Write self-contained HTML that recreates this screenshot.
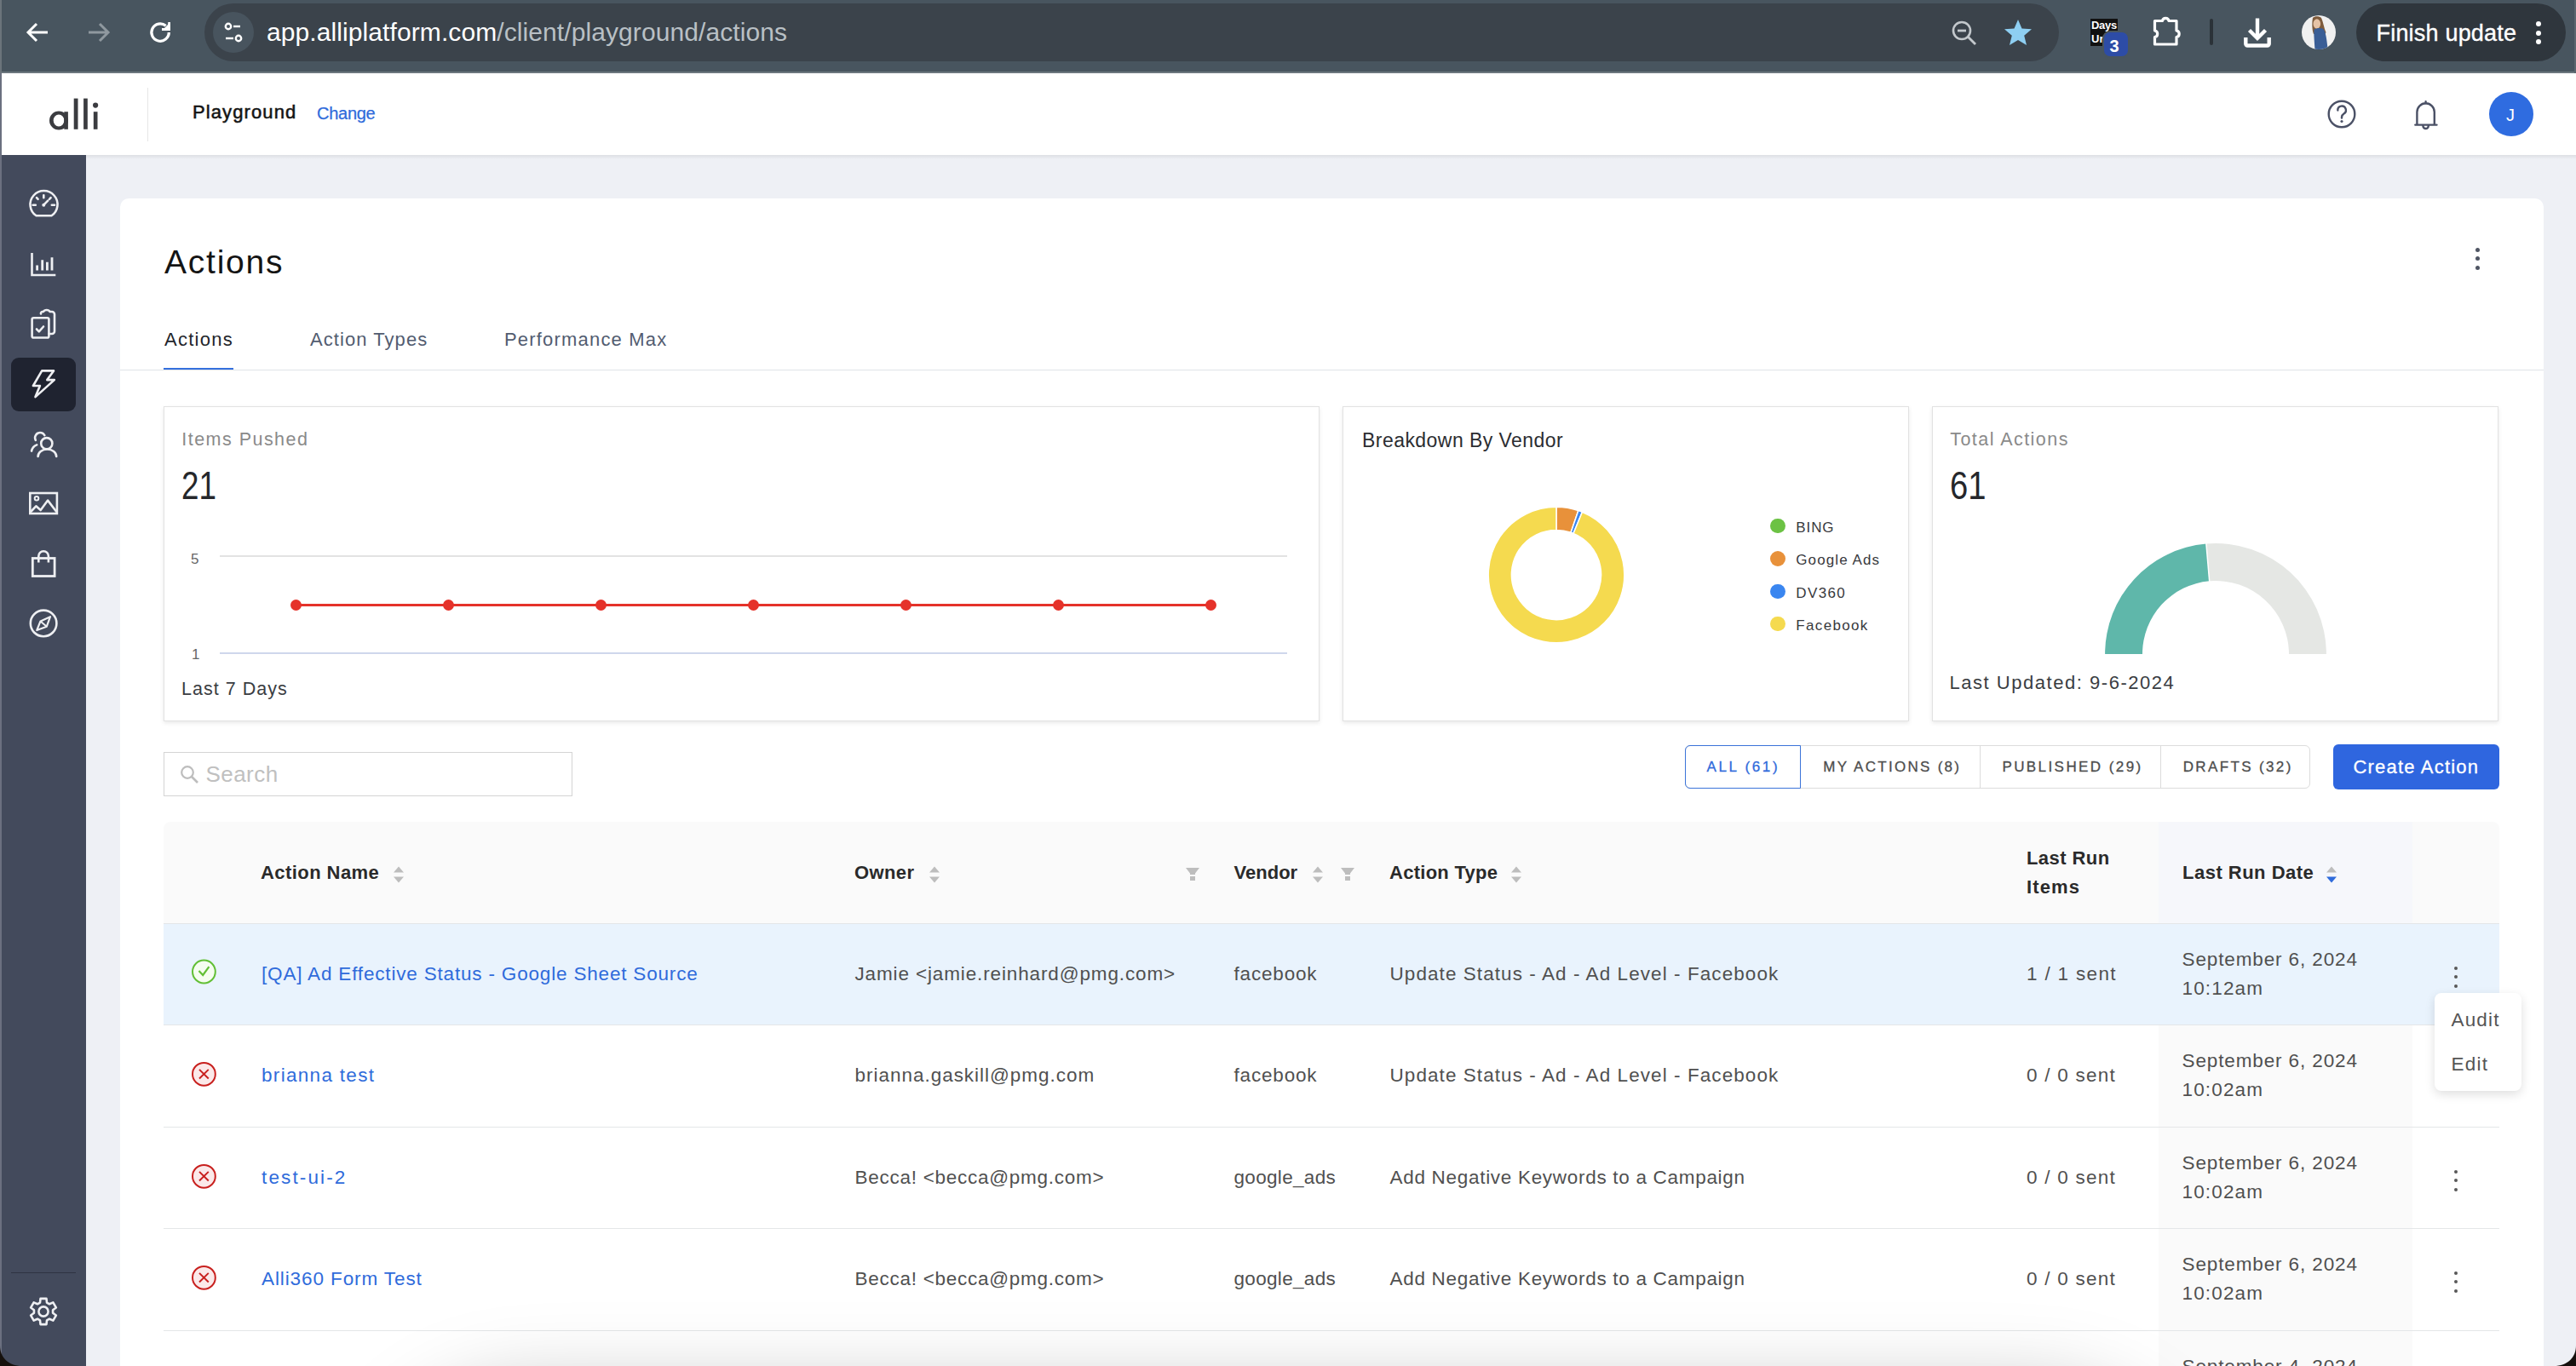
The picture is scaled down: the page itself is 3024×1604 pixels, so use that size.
<!DOCTYPE html>
<html><head><meta charset="utf-8"><title>Actions - alli</title>
<style>
html,body{margin:0;padding:0;width:3024px;height:1604px;overflow:hidden;background:#16110d;}
body{position:relative;font-family:"Liberation Sans",sans-serif;}
.t{position:absolute;white-space:nowrap;line-height:1;}
.r{position:absolute;}
</style></head><body>
<div class="r" style="left:0px;top:0px;width:3024px;height:86px;background:#48555f;"></div>
<div class="r" style="left:0px;top:84px;width:3024px;height:2px;background:#6c777e;"></div>
<div class="r" style="left:0px;top:0px;width:2px;height:86px;background:#6b747b;"></div>
<div class="r" style="left:3022px;top:0px;width:2px;height:86px;background:#5b666e;"></div>
<svg class="r" style="left:28px;top:22px;" width="32" height="32" viewBox="0 0 32 32"><path d="M28 16H6M15 6L5 16L15 26" fill="none" stroke="#fff" stroke-width="3" stroke-linecap="butt" stroke-linejoin="miter"/></svg>
<svg class="r" style="left:100px;top:22px;" width="32" height="32" viewBox="0 0 32 32"><path d="M4 16H26M17 6L27 16L17 26" fill="none" stroke="#8f989f" stroke-width="3"/></svg>
<svg class="r" style="left:160px;top:10px" width="56" height="56" viewBox="160 10 56 56"><path d="M194.66 30.25A10.2 10.2 0 1 0 198.3 38.06" fill="none" stroke="#fff" stroke-width="3.3"/><path d="M190 36H200V26Z" fill="#fff"/><path d="M197.2 26H200V36H190V33H197.2Z" fill="#fff"/></svg>
<div class="r" style="left:240px;top:4px;width:2177px;height:68px;background:#3b434b;border-radius:34px;"></div>
<div class="r" style="left:250px;top:14px;width:48px;height:48px;background:#48545e;border-radius:24px;"></div>
<svg class="r" style="left:258px;top:22px;" width="32" height="32" viewBox="0 0 32 32"><circle cx="10" cy="9" r="3.2" fill="none" stroke="#fff" stroke-width="2.4"/><path d="M16 9H24" stroke="#fff" stroke-width="2.4"/><circle cx="22" cy="23" r="3.2" fill="none" stroke="#fff" stroke-width="2.4"/><path d="M7 23H16" stroke="#fff" stroke-width="2.4"/></svg>
<div class="t" style="left:313px;top:22.5px;font-size:30px;color:#ffffff;letter-spacing:0.09px;">app.alliplatform.com<span style="color:#b9c0c5">/client/playground/actions</span></div>
<svg class="r" style="left:2289px;top:22px;" width="34" height="34" viewBox="0 0 34 34"><circle cx="14" cy="14" r="10" fill="none" stroke="#c3c8cc" stroke-width="2.6"/><path d="M21 21L30 30" stroke="#c3c8cc" stroke-width="2.8"/><path d="M9 14H19" stroke="#c3c8cc" stroke-width="2.8"/></svg>
<svg class="r" style="left:2350px;top:20px;" width="38" height="36" viewBox="0 0 38 36"><path d="M19 3L23.5 13.5L35 14.3L26.2 21.8L29 33L19 27L9 33L11.8 21.8L3 14.3L14.5 13.5Z" fill="#8ecff2"/></svg>
<div class="r" style="left:2454px;top:22px;width:32px;height:32px;background:#111;"></div>
<div class="t" style="left:2455px;top:23.2px;font-size:13px;color:#fff;font-weight:700;letter-spacing:-0.3px;">Days</div>
<div class="t" style="left:2455px;top:38.5px;font-size:13px;color:#fff;font-weight:700;">Ur</div>
<div class="r" style="left:2468px;top:36px;width:32px;height:32px;background:#2d4ca6;border-radius:9px;border:2.5px solid #48555f;box-sizing:border-box;"></div>
<div class="t" style="left:2476.5px;top:44.0px;font-size:20px;color:#fff;font-weight:700;">3</div>
<svg class="r" style="left:2520px;top:14px;" width="48" height="46" viewBox="0 0 48 46"><path d="M9.5 10.5H18.5A3.8 3.8 0 0 1 26 10.5H35V22A3.8 3.8 0 0 1 35 29.5V38H9.5V29.5A3.8 3.8 0 0 0 9.5 22Z" fill="none" stroke="#fff" stroke-width="3.2" stroke-linejoin="round"/></svg>
<div class="r" style="left:2594px;top:22px;width:4px;height:31px;background:#2b3238;border-radius:2px;"></div>
<svg class="r" style="left:2630px;top:18px;" width="40" height="40" viewBox="0 0 40 40"><path d="M20 3.5V27M10.5 17.5L20 27L29.5 17.5" fill="none" stroke="#fff" stroke-width="4.4"/><path d="M6.3 26V33.5A2 2 0 0 0 8.3 35.5H31.7A2 2 0 0 0 33.7 33.5V26" fill="none" stroke="#fff" stroke-width="4.4"/></svg>
<svg class="r" style="left:2702px;top:18px;" width="40" height="40" viewBox="0 0 40 40"><defs><clipPath id="avc"><circle cx="20" cy="20" r="20"/></clipPath></defs><g clip-path="url(#avc)"><rect width="40" height="40" fill="#f1f1f1"/><path d="M13 3C15 0.5 21 0.5 23 3C25 7 26 14 28.5 20L27 23L14 22C12 17 12 8 13 3Z" fill="#7e5b3c"/><ellipse cx="17.8" cy="10" rx="4.3" ry="5.8" fill="#e6c3a6"/><path d="M14.5 16.5C17 15 22 14.5 24.5 15.5C27.5 17 29 24 30.5 38.5L26 40H15.5C15 32 14 22 14.5 16.5Z" fill="#3a5e96"/></g></svg>
<div class="r" style="left:2766px;top:4px;width:246px;height:68px;background:#2f363d;border-radius:34px;"></div>
<div class="t" style="left:2789.5px;top:26.1px;font-size:27px;color:#fff;letter-spacing:0.2px;-webkit-text-stroke:0.35px #fff;">Finish update</div>
<div class="r" style="left:2977px;top:25px;width:6px;height:6px;background:#fff;border-radius:3px;"></div>
<div class="r" style="left:2977px;top:35.5px;width:6px;height:6px;background:#fff;border-radius:3px;"></div>
<div class="r" style="left:2977px;top:46px;width:6px;height:6px;background:#fff;border-radius:3px;"></div>
<div class="r" style="left:0px;top:86px;width:3024px;height:96px;background:#ffffff;"></div>
<div class="r" style="left:0px;top:86px;width:2px;height:1518px;background:#6b7080;"></div>
<svg class="r" style="left:0;top:85px" width="130" height="97" viewBox="0 85 130 97"><path fill-rule="evenodd" fill="#3b3c40" d="M69 130.5A11 11 0 1 0 69 152.5A11 11 0 1 0 69 130.5ZM69 134.6A6.3 6.9 0 1 1 69 148.4A6.3 6.9 0 1 1 69 134.6Z"/><rect x="75.3" y="131.2" width="4.6" height="20.6" fill="#3b3c40"/><rect x="86.7" y="115.6" width="4.8" height="36.2" fill="#3b3c40"/><rect x="98.1" y="115.6" width="4.7" height="36.2" fill="#3b3c40"/><rect x="109.8" y="131.2" width="4.7" height="20.6" fill="#3b3c40"/><circle cx="112.1" cy="123.6" r="3.1" fill="#3b3c40"/></svg>
<div class="r" style="left:173px;top:103px;width:1px;height:63px;background:#e6e6e6;"></div>
<div class="t" style="left:226px;top:121.3px;font-size:22px;color:#141414;letter-spacing:1.1px;-webkit-text-stroke:0.55px #141414;">Playground</div>
<div class="t" style="left:372px;top:123.0px;font-size:20px;color:#2f6bdb;letter-spacing:-0.27px;-webkit-text-stroke:0.25px #2f6bdb;">Change</div>
<svg class="r" style="left:2729px;top:114px;" width="40" height="40" viewBox="0 0 40 40"><circle cx="20" cy="20" r="15.3" fill="none" stroke="#4b5166" stroke-width="2.4"/><path d="M15.3 15.5A4.8 4.8 0 1 1 22.5 19.5C21 20.5 20 21.3 20 23.5V24.5" fill="none" stroke="#4b5166" stroke-width="2.4" stroke-linecap="round"/><circle cx="20" cy="28.5" r="1.6" fill="#4b5166"/></svg>
<svg class="r" style="left:2830px;top:114px;" width="36" height="42" viewBox="0 0 36 42"><path d="M7.4 32.6V17.5A10.2 10.2 0 0 1 27.8 17.5V32.6M5.3 32.6H30.5M17.6 5.3V7.5M14.4 33.8A3.2 3.2 0 0 0 20.8 33.8" fill="none" stroke="#4b5166" stroke-width="2.4" stroke-linecap="round"/></svg>
<div class="r" style="left:2922px;top:108px;width:52px;height:52px;background:#2f6ce0;border-radius:26px;"></div>
<div class="t" style="left:2942px;top:125.0px;font-size:20px;color:#fff;">J</div>
<div class="r" style="left:2px;top:182px;width:99px;height:1422px;background:#434a5c;"></div>
<div class="r" style="left:13px;top:420px;width:76px;height:62.5px;background:#1f2330;border-radius:9px;"></div>
<div class="r" style="left:13px;top:1494px;width:76px;height:1px;background:#2e3342;"></div>
<svg class="r" style="left:0;top:0" width="101" height="1604" viewBox="0 0 101 1604"><path d="M42.5 253.3A16 16 0 1 1 60.5 253.3Z" fill="none" stroke="#eeeff2" stroke-width="2.6" stroke-linecap="round" stroke-linejoin="round"/><path d="M38.6 240.7H41.8M60.8 240.7H64M51.3 229.3V232.2M43 232.2L44.6 233.9M59.6 232.2L58 233.9M51.3 240.7L56.2 235.7" fill="none" stroke="#eeeff2" stroke-width="2.6" stroke-linecap="round" stroke-linejoin="round"/><circle cx="51.3" cy="240.7" r="2" fill="#eeeff2"/><path d="M37.5 297V323H65.3" fill="none" stroke="#eeeff2" stroke-width="2.6" stroke-linejoin="miter"/><path d="M43.6 317.5V311.5M49.7 317.5V305.3M55.4 317.5V307.8M61 317.5V302.3" fill="none" stroke="#eeeff2" stroke-width="2.8"/><path d="M48 368.5A2 2 0 0 1 50 366H51A4 3 0 0 1 58.5 366H61A3 3 0 0 1 64 369V389A3 3 0 0 1 61 392H57.5" fill="none" stroke="#eeeff2" stroke-width="2.6" stroke-linecap="round" stroke-linejoin="round"/><rect x="37.6" y="373.3" width="19.8" height="23.2" rx="1.8" fill="none" stroke="#eeeff2" stroke-width="2.6" stroke-linecap="round" stroke-linejoin="round"/><path d="M43 386.5L45.8 389.3L51 383.5" fill="none" stroke="#eeeff2" stroke-width="2.6" stroke-linecap="round" stroke-linejoin="round"/><path d="M49.2 435.4H63L55.3 446.1H63.8L41.5 466.1L46.9 453H38.9Z" fill="none" stroke="#eeeff2" stroke-width="2.6" stroke-linecap="round" stroke-linejoin="round"/><circle cx="54.8" cy="520.7" r="6.6" fill="none" stroke="#eeeff2" stroke-width="2.6" stroke-linecap="round" stroke-linejoin="round"/><path d="M44.6 536A10.8 8.5 0 0 1 66.2 536" fill="none" stroke="#eeeff2" stroke-width="2.6" stroke-linecap="round" stroke-linejoin="round"/><path d="M41.8 516.8A5.5 5.5 0 1 1 52.3 511.2" fill="none" stroke="#eeeff2" stroke-width="2.6" stroke-linecap="round" stroke-linejoin="round"/><path d="M37 529.6A10 10 0 0 1 43.2 522.4" fill="none" stroke="#eeeff2" stroke-width="2.6" stroke-linecap="round" stroke-linejoin="round"/><rect x="35.3" y="579" width="31.6" height="24" fill="none" stroke="#eeeff2" stroke-width="2.6"/><circle cx="43" cy="585.3" r="2.3" fill="none" stroke="#eeeff2" stroke-width="2"/><path d="M36.5 600.5L42.3 594.3L47.7 599L56.1 587.6L66 600.5" fill="none" stroke="#eeeff2" stroke-width="2.6" stroke-linecap="round" stroke-linejoin="round"/><rect x="38.3" y="655.5" width="25.8" height="21" fill="none" stroke="#eeeff2" stroke-width="2.8"/><path d="M45.3 660.5V653A5.8 5.8 0 0 1 56.9 653V660.5" fill="none" stroke="#eeeff2" stroke-width="2.6"/><circle cx="51.1" cy="731.9" r="15.3" fill="none" stroke="#eeeff2" stroke-width="2.6" stroke-linecap="round" stroke-linejoin="round"/><path d="M59 724.2L54.8 735.7L43.3 740L47.5 729.4Z" fill="none" stroke="#eeeff2" stroke-width="2.2" stroke-linejoin="round"/><path d="M47.5 729.4L54.8 735.7" stroke="#eeeff2" stroke-width="2"/><path d="M47.51 1524.90 L54.49 1524.90 L55.01 1529.54 L58.05 1531.30 L62.34 1529.43 L65.82 1535.47 L62.06 1538.25 L62.06 1541.75 L65.82 1544.53 L62.34 1550.57 L58.05 1548.70 L55.01 1550.46 L54.49 1555.10 L47.51 1555.10 L46.99 1550.46 L43.95 1548.70 L39.66 1550.57 L36.18 1544.53 L39.94 1541.75 L39.94 1538.25 L36.18 1535.47 L39.66 1529.43 L43.95 1531.30 L46.99 1529.54Z" fill="none" stroke="#eeeff2" stroke-width="2.6" stroke-linecap="round" stroke-linejoin="round"/><circle cx="51" cy="1540" r="5.6" fill="none" stroke="#eeeff2" stroke-width="2.6" stroke-linecap="round" stroke-linejoin="round"/></svg>
<div class="r" style="left:101px;top:182px;width:2923px;height:1422px;background:#eef0f5;"></div>
<div class="r" style="left:101px;top:182px;width:2923px;height:5px;background:linear-gradient(rgba(0,0,0,0.07),rgba(0,0,0,0));"></div>
<div class="r" style="left:141px;top:233px;width:2845px;height:1400px;background:#ffffff;border-radius:10px;"></div>
<div class="t" style="left:193px;top:287.9px;font-size:39px;color:#141414;letter-spacing:1.77px;">Actions</div>
<div class="r" style="left:2905.5px;top:290.5px;width:5px;height:5px;background:#4f5563;border-radius:3px;"></div>
<div class="r" style="left:2905.5px;top:301.0px;width:5px;height:5px;background:#4f5563;border-radius:3px;"></div>
<div class="r" style="left:2905.5px;top:311.5px;width:5px;height:5px;background:#4f5563;border-radius:3px;"></div>
<div class="t" style="left:193px;top:387.8px;font-size:22px;color:#22252b;letter-spacing:1.26px;">Actions</div>
<div class="t" style="left:364px;top:387.8px;font-size:22px;color:#525c70;letter-spacing:1.06px;">Action Types</div>
<div class="t" style="left:592px;top:387.8px;font-size:22px;color:#525c70;letter-spacing:1.19px;">Performance Max</div>
<div class="r" style="left:141px;top:433.5px;width:2845px;height:1px;background:#e0e3e8;"></div>
<div class="r" style="left:192px;top:432.2px;width:82px;height:2px;background:#3570dd;"></div>
<div class="r" style="left:192px;top:477px;width:1357px;height:370px;background:#fff;border:1px solid #e2e2e2;box-sizing:border-box;box-shadow:0 2px 5px rgba(0,0,0,0.09);"></div>
<div class="r" style="left:1576px;top:477px;width:665px;height:370px;background:#fff;border:1px solid #e2e2e2;box-sizing:border-box;box-shadow:0 2px 5px rgba(0,0,0,0.09);"></div>
<div class="r" style="left:2268px;top:477px;width:665px;height:370px;background:#fff;border:1px solid #e2e2e2;box-sizing:border-box;box-shadow:0 2px 5px rgba(0,0,0,0.09);"></div>
<div class="t" style="left:213.3px;top:506.4px;font-size:21.5px;color:#8a8a8a;letter-spacing:1.47px;">Items Pushed</div>
<div class="t" style="left:213px;top:546.9px;font-size:46px;color:#25272b;transform:scaleX(0.8);transform-origin:0 0;">21</div>
<div class="t" style="left:224px;top:647.5px;font-size:17px;color:#666;">5</div>
<div class="t" style="left:225px;top:759.5px;font-size:17px;color:#666;">1</div>
<div class="r" style="left:258px;top:652px;width:1253px;height:2px;background:#e3e3e3;"></div>
<div class="r" style="left:258px;top:766px;width:1253px;height:2px;background:#cfd7ec;"></div>
<div class="r" style="left:347px;top:708.5px;width:1075px;height:3px;background:#e5322a;"></div>
<div class="r" style="left:341.0px;top:703.5px;width:13px;height:13px;background:#e5322a;border-radius:7px;"></div>
<div class="r" style="left:520.03px;top:703.5px;width:13px;height:13px;background:#e5322a;border-radius:7px;"></div>
<div class="r" style="left:699.06px;top:703.5px;width:13px;height:13px;background:#e5322a;border-radius:7px;"></div>
<div class="r" style="left:878.09px;top:703.5px;width:13px;height:13px;background:#e5322a;border-radius:7px;"></div>
<div class="r" style="left:1057.12px;top:703.5px;width:13px;height:13px;background:#e5322a;border-radius:7px;"></div>
<div class="r" style="left:1236.15px;top:703.5px;width:13px;height:13px;background:#e5322a;border-radius:7px;"></div>
<div class="r" style="left:1415.18px;top:703.5px;width:13px;height:13px;background:#e5322a;border-radius:7px;"></div>
<div class="t" style="left:213px;top:798.7px;font-size:21.5px;color:#3a3d42;letter-spacing:1.02px;">Last 7 Days</div>
<div class="t" style="left:1599px;top:505.9px;font-size:23px;color:#2b2d31;letter-spacing:0.45px;">Breakdown By Vendor</div>
<svg class="r" style="left:1727px;top:575px;" width="200" height="200" viewBox="0 0 200 200"><path d="M100.00 20.20A79.8 79.8 0 0 1 125.85 24.50L117.04 50.24A52.6 52.6 0 0 0 100.00 47.40Z" fill="#e8913a" stroke="#fff" stroke-width="1.5"/><path d="M125.85 24.50A79.8 79.8 0 0 1 130.41 26.22L120.04 51.37A52.6 52.6 0 0 0 117.04 50.24Z" fill="#3a86f0" stroke="#fff" stroke-width="1.5"/><path d="M130.41 26.22A79.8 79.8 0 1 1 99.99 20.20L99.99 47.40A52.6 52.6 0 1 0 120.04 51.37Z" fill="#f5da4f" stroke="#fff" stroke-width="1.5"/></svg>
<div class="r" style="left:2078.4px;top:609.0px;width:17.2px;height:17.2px;background:#6cc244;border-radius:9px;"></div>
<div class="t" style="left:2108.3px;top:610.8px;font-size:17px;color:#38393d;letter-spacing:0.89px;">BING</div>
<div class="r" style="left:2078.4px;top:647.35px;width:17.2px;height:17.2px;background:#e8913a;border-radius:9px;"></div>
<div class="t" style="left:2108.3px;top:649.1px;font-size:17px;color:#38393d;letter-spacing:1.1px;">Google Ads</div>
<div class="r" style="left:2078.4px;top:685.7px;width:17.2px;height:17.2px;background:#3a86f0;border-radius:9px;"></div>
<div class="t" style="left:2108.3px;top:687.5px;font-size:17px;color:#38393d;letter-spacing:1.37px;">DV360</div>
<div class="r" style="left:2078.4px;top:724.0500000000001px;width:17.2px;height:17.2px;background:#f5da4f;border-radius:9px;"></div>
<div class="t" style="left:2108.3px;top:725.8px;font-size:17px;color:#38393d;letter-spacing:1.33px;">Facebook</div>
<div class="t" style="left:2289.2px;top:506.4px;font-size:21.5px;color:#8a8a8a;letter-spacing:1.46px;">Total Actions</div>
<div class="t" style="left:2289px;top:546.9px;font-size:46px;color:#25272b;transform:scaleX(0.83);transform-origin:0 0;">61</div>
<svg class="r" style="left:2460.6px;top:628.1px;" width="280" height="140" viewBox="0 0 280 140"><path d="M10.10 140.00A129.9 129.9 0 0 1 128.90 10.57L132.65 54.31A86 86 0 0 0 54.00 140.00Z" fill="#5fb7aa"/><path d="M128.90 10.57A129.9 129.9 0 0 1 269.90 140.00L226.00 140.00A86 86 0 0 0 132.65 54.31Z" fill="#e5e7e4"/><path d="M132.74 55.31 L128.81 9.48" stroke="#fff" stroke-width="1.5"/></svg>
<div class="t" style="left:2288.5px;top:791.3px;font-size:22px;color:#3a3d42;letter-spacing:1.53px;">Last Updated: 9-6-2024</div>
<div class="r" style="left:192px;top:883px;width:480px;height:52px;background:#fff;border:1.5px solid #d4d4d4;box-sizing:border-box;"></div>
<svg class="r" style="left:210px;top:897px;" width="26" height="26" viewBox="0 0 26 26"><circle cx="10" cy="10" r="6.8" fill="none" stroke="#bdbdbd" stroke-width="2.2"/><path d="M15 15L22 22" stroke="#bdbdbd" stroke-width="2.6"/></svg>
<div class="t" style="left:241.5px;top:895.9px;font-size:26px;color:#c0c0c0;letter-spacing:0.45px;">Search</div>
<div class="r" style="left:1978px;top:875px;width:734px;height:51px;background:#fff;border:1.5px solid #dcdcdc;border-radius:6px;box-sizing:border-box;"></div>
<div class="r" style="left:2323.5px;top:876px;width:1.5px;height:49px;background:#dcdcdc;"></div>
<div class="r" style="left:2535.5px;top:876px;width:1.5px;height:49px;background:#dcdcdc;"></div>
<div class="r" style="left:1978px;top:875px;width:136px;height:51px;background:transparent;border:1.5px solid #3b73d9;border-radius:6px 0 0 6px;box-sizing:border-box;"></div>
<div class="t" style="left:2003.4px;top:891.5px;font-size:17px;color:#2f6bdb;letter-spacing:2.67px;-webkit-text-stroke:0.3px #2f6bdb;">ALL (61)</div>
<div class="t" style="left:2140.3px;top:891.5px;font-size:17px;color:#4d4d4d;letter-spacing:2.28px;-webkit-text-stroke:0.3px #4d4d4d;">MY ACTIONS (8)</div>
<div class="t" style="left:2350.4px;top:891.5px;font-size:17px;color:#4d4d4d;letter-spacing:2.42px;-webkit-text-stroke:0.3px #4d4d4d;">PUBLISHED (29)</div>
<div class="t" style="left:2562.7px;top:891.5px;font-size:17px;color:#4d4d4d;letter-spacing:2.37px;-webkit-text-stroke:0.3px #4d4d4d;">DRAFTS (32)</div>
<div class="r" style="left:2739px;top:874px;width:195px;height:53px;background:#2f66df;border-radius:6px;"></div>
<div class="t" style="left:2762.5px;top:889.5px;font-size:22px;color:#fff;letter-spacing:1.2px;-webkit-text-stroke:0.3px #fff;">Create Action</div>
<div class="r" style="left:192px;top:965px;width:2742px;height:120px;background:#fafafa;border-radius:8px 8px 0 0;"></div>
<div class="r" style="left:2534px;top:965px;width:298px;height:120px;background:#f6f7fb;"></div>
<div class="r" style="left:192px;top:1084px;width:2742px;height:119.5px;background:#e9f3fd;"></div>
<div class="r" style="left:2534px;top:1203px;width:298px;height:401px;background:#fafafa;"></div>
<div class="r" style="left:192px;top:1084px;width:2742px;height:1px;background:#e4e6e8;"></div>
<div class="r" style="left:192px;top:1203.3px;width:2742px;height:1px;background:#e4e6e8;"></div>
<div class="r" style="left:192px;top:1322.8px;width:2742px;height:1px;background:#e4e6e8;"></div>
<div class="r" style="left:192px;top:1442.3px;width:2742px;height:1px;background:#e4e6e8;"></div>
<div class="r" style="left:192px;top:1561.6px;width:2742px;height:1px;background:#e4e6e8;"></div>
<div class="t" style="left:306px;top:1014.3px;font-size:22px;color:#2a2a2a;font-weight:700;letter-spacing:0.43px;">Action Name</div>
<svg class="r" style="left:461px;top:1016px;" width="14" height="22" viewBox="0 0 14 22"><path d="M7 1.5L13 8.5H1Z" fill="#bdbdbd"/><path d="M7 20.5L13 13.5H1Z" fill="#bdbdbd"/></svg>
<div class="t" style="left:1003px;top:1014.3px;font-size:22px;color:#2a2a2a;font-weight:700;letter-spacing:0.4px;">Owner</div>
<svg class="r" style="left:1089.5px;top:1016px;" width="14" height="22" viewBox="0 0 14 22"><path d="M7 1.5L13 8.5H1Z" fill="#bdbdbd"/><path d="M7 20.5L13 13.5H1Z" fill="#bdbdbd"/></svg>
<svg class="r" style="left:1390.6px;top:1017px;" width="18" height="18" viewBox="0 0 18 18"><path d="M1 2H17L12 8.5V10H6V8.5Z" fill="#bdbdbd"/><rect x="6" y="12" width="6" height="5" fill="#bdbdbd"/></svg>
<div class="t" style="left:1448.5px;top:1014.3px;font-size:22px;color:#2a2a2a;font-weight:700;letter-spacing:0.02px;">Vendor</div>
<svg class="r" style="left:1540px;top:1016px;" width="14" height="22" viewBox="0 0 14 22"><path d="M7 1.5L13 8.5H1Z" fill="#bdbdbd"/><path d="M7 20.5L13 13.5H1Z" fill="#bdbdbd"/></svg>
<svg class="r" style="left:1573px;top:1017px;" width="18" height="18" viewBox="0 0 18 18"><path d="M1 2H17L12 8.5V10H6V8.5Z" fill="#bdbdbd"/><rect x="6" y="12" width="6" height="5" fill="#bdbdbd"/></svg>
<div class="t" style="left:1631px;top:1014.3px;font-size:22px;color:#2a2a2a;font-weight:700;letter-spacing:0.27px;">Action Type</div>
<svg class="r" style="left:1773px;top:1016px;" width="14" height="22" viewBox="0 0 14 22"><path d="M7 1.5L13 8.5H1Z" fill="#bdbdbd"/><path d="M7 20.5L13 13.5H1Z" fill="#bdbdbd"/></svg>
<div class="t" style="left:2379px;top:997.3px;font-size:22px;color:#2a2a2a;font-weight:700;letter-spacing:0.43px;">Last Run</div>
<div class="t" style="left:2379px;top:1031.3px;font-size:22px;color:#2a2a2a;font-weight:700;letter-spacing:1.14px;">Items</div>
<div class="t" style="left:2562px;top:1014.3px;font-size:22px;color:#2a2a2a;font-weight:700;letter-spacing:0.49px;">Last Run Date</div>
<svg class="r" style="left:2729.5px;top:1016px;" width="14" height="22" viewBox="0 0 14 22"><path d="M7 1.5L13 8.5H1Z" fill="#bdbdbd"/><path d="M7 20.5L13 13.5H1Z" fill="#2f6bdb"/></svg>
<svg class="r" style="left:224px;top:1126.3px;" width="31" height="31" viewBox="0 0 31 31"><circle cx="15.4" cy="15" r="13.4" fill="#f5fdf0" stroke="#62bf35" stroke-width="2"/><path d="M9.5 14L14.2 19L21.4 9.2" fill="none" stroke="#62bf35" stroke-width="2.2" stroke-linejoin="miter"/></svg>
<div class="t" style="left:307px;top:1133.4px;font-size:22.5px;color:#2f6bdb;letter-spacing:0.82px;">[QA] Ad Effective Status - Google Sheet Source</div>
<div class="t" style="left:1003.5px;top:1133.4px;font-size:22.5px;color:#505050;letter-spacing:0.87px;">Jamie &lt;jamie.reinhard@pmg.com&gt;</div>
<div class="t" style="left:1448.5px;top:1133.4px;font-size:22.5px;color:#505050;letter-spacing:0.82px;">facebook</div>
<div class="t" style="left:1631.5px;top:1133.4px;font-size:22.5px;color:#505050;letter-spacing:1.07px;">Update Status - Ad - Ad Level - Facebook</div>
<div class="t" style="left:2379px;top:1133.4px;font-size:22.5px;color:#505050;letter-spacing:1.33px;">1 / 1 sent</div>
<div class="t" style="left:2561.5px;top:1116.2px;font-size:22.5px;color:#505050;letter-spacing:0.88px;">September 6, 2024</div>
<div class="t" style="left:2561.5px;top:1150.2px;font-size:22.5px;color:#505050;letter-spacing:1.16px;">10:12am</div>
<div class="r" style="left:2881.2px;top:1134.7px;width:4.2px;height:4.2px;background:#585858;border-radius:3px;"></div>
<div class="r" style="left:2881.2px;top:1145.2px;width:4.2px;height:4.2px;background:#585858;border-radius:3px;"></div>
<div class="r" style="left:2881.2px;top:1155.7px;width:4.2px;height:4.2px;background:#585858;border-radius:3px;"></div>
<svg class="r" style="left:224px;top:1246px;" width="31" height="31" viewBox="0 0 31 31"><circle cx="15.4" cy="15.3" r="13.4" fill="#fbe9e9" stroke="#c8201e" stroke-width="2"/><path d="M10 9.9L20.8 20.5M20.8 9.9L10 20.5" fill="none" stroke="#c8201e" stroke-width="2"/></svg>
<div class="t" style="left:307px;top:1252.4px;font-size:22.5px;color:#2f6bdb;letter-spacing:1.31px;">brianna test</div>
<div class="t" style="left:1003.5px;top:1252.4px;font-size:22.5px;color:#505050;letter-spacing:0.98px;">brianna.gaskill@pmg.com</div>
<div class="t" style="left:1448.5px;top:1252.4px;font-size:22.5px;color:#505050;letter-spacing:0.82px;">facebook</div>
<div class="t" style="left:1631.5px;top:1252.4px;font-size:22.5px;color:#505050;letter-spacing:1.07px;">Update Status - Ad - Ad Level - Facebook</div>
<div class="t" style="left:2379px;top:1252.4px;font-size:22.5px;color:#505050;letter-spacing:1.24px;">0 / 0 sent</div>
<div class="t" style="left:2561.5px;top:1235.2px;font-size:22.5px;color:#505050;letter-spacing:0.88px;">September 6, 2024</div>
<div class="t" style="left:2561.5px;top:1269.2px;font-size:22.5px;color:#505050;letter-spacing:1.16px;">10:02am</div>
<div class="r" style="left:2881.2px;top:1253.7px;width:4.2px;height:4.2px;background:#585858;border-radius:3px;"></div>
<div class="r" style="left:2881.2px;top:1264.2px;width:4.2px;height:4.2px;background:#585858;border-radius:3px;"></div>
<div class="r" style="left:2881.2px;top:1274.7px;width:4.2px;height:4.2px;background:#585858;border-radius:3px;"></div>
<svg class="r" style="left:224px;top:1365.8px;" width="31" height="31" viewBox="0 0 31 31"><circle cx="15.4" cy="15.3" r="13.4" fill="#fbe9e9" stroke="#c8201e" stroke-width="2"/><path d="M10 9.9L20.8 20.5M20.8 9.9L10 20.5" fill="none" stroke="#c8201e" stroke-width="2"/></svg>
<div class="t" style="left:307px;top:1372.2px;font-size:22.5px;color:#2f6bdb;letter-spacing:2.13px;">test-ui-2</div>
<div class="t" style="left:1003.5px;top:1372.2px;font-size:22.5px;color:#505050;letter-spacing:0.73px;">Becca! &lt;becca@pmg.com&gt;</div>
<div class="t" style="left:1448.5px;top:1372.2px;font-size:22.5px;color:#505050;letter-spacing:0.32px;">google_ads</div>
<div class="t" style="left:1631.5px;top:1372.2px;font-size:22.5px;color:#505050;letter-spacing:0.7px;">Add Negative Keywords to a Campaign</div>
<div class="t" style="left:2379px;top:1372.2px;font-size:22.5px;color:#505050;letter-spacing:1.24px;">0 / 0 sent</div>
<div class="t" style="left:2561.5px;top:1355.0px;font-size:22.5px;color:#505050;letter-spacing:0.88px;">September 6, 2024</div>
<div class="t" style="left:2561.5px;top:1389.0px;font-size:22.5px;color:#505050;letter-spacing:1.16px;">10:02am</div>
<div class="r" style="left:2881.2px;top:1373.5px;width:4.2px;height:4.2px;background:#585858;border-radius:3px;"></div>
<div class="r" style="left:2881.2px;top:1384.0px;width:4.2px;height:4.2px;background:#585858;border-radius:3px;"></div>
<div class="r" style="left:2881.2px;top:1394.5px;width:4.2px;height:4.2px;background:#585858;border-radius:3px;"></div>
<svg class="r" style="left:224px;top:1485px;" width="31" height="31" viewBox="0 0 31 31"><circle cx="15.4" cy="15.3" r="13.4" fill="#fbe9e9" stroke="#c8201e" stroke-width="2"/><path d="M10 9.9L20.8 20.5M20.8 9.9L10 20.5" fill="none" stroke="#c8201e" stroke-width="2"/></svg>
<div class="t" style="left:307px;top:1491.4px;font-size:22.5px;color:#2f6bdb;letter-spacing:0.9px;">Alli360 Form Test</div>
<div class="t" style="left:1003.5px;top:1491.4px;font-size:22.5px;color:#505050;letter-spacing:0.73px;">Becca! &lt;becca@pmg.com&gt;</div>
<div class="t" style="left:1448.5px;top:1491.4px;font-size:22.5px;color:#505050;letter-spacing:0.32px;">google_ads</div>
<div class="t" style="left:1631.5px;top:1491.4px;font-size:22.5px;color:#505050;letter-spacing:0.7px;">Add Negative Keywords to a Campaign</div>
<div class="t" style="left:2379px;top:1491.4px;font-size:22.5px;color:#505050;letter-spacing:1.24px;">0 / 0 sent</div>
<div class="t" style="left:2561.5px;top:1474.2px;font-size:22.5px;color:#505050;letter-spacing:0.88px;">September 6, 2024</div>
<div class="t" style="left:2561.5px;top:1508.2px;font-size:22.5px;color:#505050;letter-spacing:1.16px;">10:02am</div>
<div class="r" style="left:2881.2px;top:1492.7px;width:4.2px;height:4.2px;background:#585858;border-radius:3px;"></div>
<div class="r" style="left:2881.2px;top:1503.2px;width:4.2px;height:4.2px;background:#585858;border-radius:3px;"></div>
<div class="r" style="left:2881.2px;top:1513.7px;width:4.2px;height:4.2px;background:#585858;border-radius:3px;"></div>
<div class="t" style="left:2561.5px;top:1593.8px;font-size:22.5px;color:#505050;letter-spacing:0.88px;">September 4, 2024</div>
<div class="r" style="left:2858px;top:1166px;width:102px;height:115px;background:#fff;border-radius:8px;box-shadow:0 4px 12px rgba(0,0,0,0.13);"></div>
<div class="t" style="left:2877.5px;top:1187.3px;font-size:22.5px;color:#555555;letter-spacing:1.17px;">Audit</div>
<div class="t" style="left:2877.5px;top:1238.9px;font-size:22.5px;color:#555555;letter-spacing:1.26px;">Edit</div>
<div class="r" style="left:0;top:1450px;width:3024px;height:154px;overflow:hidden;"><div style="position:absolute;left:470px;top:212px;width:2070px;height:400px;border-radius:150px;box-shadow:0 0 100px 28px rgba(0,0,0,0.26);background:rgba(0,0,0,0.25)"></div></div>
<svg class="r" style="left:0;top:1580px" width="26" height="24" viewBox="0 0 26 24"><path d="M0 0V24H26C10 24 0 14 0 0Z" fill="#16110d"/></svg>
<svg class="r" style="left:2998px;top:1580px" width="26" height="24" viewBox="0 0 26 24"><path d="M26 0V24H0C16 24 26 14 26 0Z" fill="#16110d"/></svg></body></html>
